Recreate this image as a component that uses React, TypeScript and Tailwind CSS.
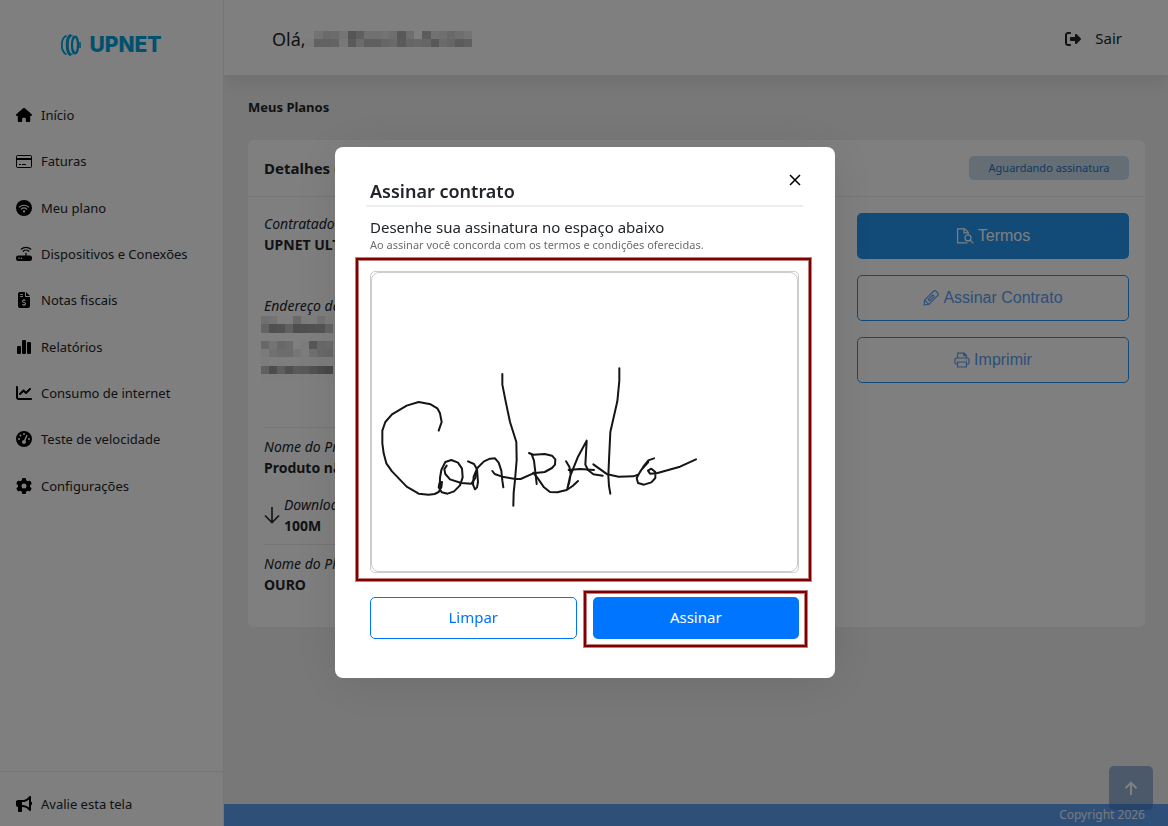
import type { ReactNode } from "react";
import {
 FaBullhorn,
 FaChartLine,
 FaFileInvoiceDollar,
 FaGaugeHigh,
 FaGear,
 FaHouse,
 FaRightFromBracket,
} from "react-icons/fa6";

function CardIcon() {
 return (
  <svg viewBox="0 0 16 16" className="size-4" aria-hidden="true">
   <rect x="0.5" y="2.5" width="15" height="12" rx="1" fill="none" stroke="currentColor" />
   <path d="M1 5h14v2H1z" fill="currentColor" />
   <path d="M3 11.500h2M6 11.500h4" stroke="currentColor" />
  </svg>
 );
}

function WifiCircleIcon() {
 return (
  <svg viewBox="0 0 16 16" className="size-4" aria-hidden="true">
   <circle cx="8" cy="8" r="8" fill="currentColor" />
   <g fill="none" stroke="#fff" strokeWidth="1.2" strokeLinecap="round">
    <path d="M3.4 7.1a6.6 6.6 0 0 1 9.2 0" />
    <path d="M5.3 9.2a3.9 3.9 0 0 1 5.4 0" />
   </g>
   <circle cx="8" cy="11.4" r="1.1" fill="#fff" />
  </svg>
 );
}

function RouterIcon() {
 return (
  <svg viewBox="0 0 16 16" className="size-4" aria-hidden="true">
   <g fill="none" stroke="currentColor" strokeWidth="1.2" strokeLinecap="round">
    <path d="M5.200 3.200a7 7 0 0 1 9.600 0" />
    <path d="M7.200 5.300a4 4 0 0 1 5.600 0" />
    <path d="M10 7v3" />
   </g>
   <rect x="0" y="9.500" width="16" height="5.500" rx="2.200" fill="currentColor" />
   <circle cx="3" cy="12.300" r="0.800" fill="#fff" />
   <circle cx="5.600" cy="12.300" r="0.800" fill="#fff" />
  </svg>
 );
}

function BarsIcon() {
 return (
  <svg viewBox="0 0 16 16" className="size-4" fill="currentColor" aria-hidden="true">
   <rect x="1" y="7" width="4" height="8" rx="1.2" />
   <rect x="6" y="1" width="4" height="14" rx="1.2" />
   <rect x="11" y="3" width="4" height="12" rx="1.2" />
  </svg>
 );
}

function FileSearchIcon() {
 return (
  <svg viewBox="0 0 18 18" className="size-[18px]" fill="none" stroke="currentColor" strokeWidth="1.2" aria-hidden="true">
   <path d="M11.5 15.9H1.6V1.9h7.2l3.4 3.4v1.5" />
   <path d="M8 1.9v4h4.2" />
   <circle cx="12" cy="10.9" r="3" />
   <path d="m14.2 13.1 3.2 3.2" />
  </svg>
 );
}

function PencilIcon() {
 return (
  <svg viewBox="0 0 16 16" className="size-4" fill="none" stroke="currentColor" strokeWidth="1.2" strokeLinejoin="round" aria-hidden="true">
   <path d="M1 15 1.6 10.2 10.4 1.4a2 2 0 0 1 2.8 0l1.4 1.4a2 2 0 0 1 0 2.8L5.8 14.4Z" />
   <path d="m1.6 10.2 4.2 4.2M5.2 9.5l4.6-4.6 1.4 1.4-4.6 4.6Z" />
  </svg>
 );
}

function PrinterIcon() {
 return (
  <svg viewBox="0 0 16 16" className="size-4" fill="none" stroke="currentColor" strokeWidth="1.2" strokeLinejoin="round" aria-hidden="true">
   <path d="M3.6 6V1.2h6.6l2.2 2.2V6M9.8 1.2v2.4h2.6" />
   <path d="M3.6 12H2.2A1.2 1.2 0 0 1 1 10.8V7.6A1.6 1.6 0 0 1 2.6 6h10.8A1.6 1.6 0 0 1 15 7.6v3.200a1.200 1.200 0 0 1-1.200 1.200h-1.400" />
   <path d="M3.600 10h8.800v5H3.600ZM12.200 8h1" />
  </svg>
 );
}

const menu = [
 { label: "Início", icon: <FaHouse size={16} /> },
 { label: "Faturas", icon: <CardIcon /> },
 { label: "Meu plano", icon: <WifiCircleIcon /> },
 { label: "Dispositivos e Conexões", icon: <RouterIcon /> },
 { label: "Notas fiscais", icon: <FaFileInvoiceDollar size={16} /> },
 { label: "Relatórios", icon: <BarsIcon /> },
 { label: "Consumo de internet", icon: <FaChartLine size={16} /> },
 { label: "Teste de velocidade", icon: <FaGaugeHigh size={16} /> },
 { label: "Configurações", icon: <FaGear size={16} /> },
];

// grey level of every block, 0 to 255
const nameBlocks = [
 [255, 230, 212, 216, 234, 170, 190, 224, 224, 230, 220, 178, 220, 255, 184, 228, 222, 210, 220, 232],
 [248, 196, 196, 200, 240, 180, 214, 190, 190, 204, 212, 180, 204, 208, 204, 176, 214, 204, 182, 192],
];
const addressBlocks = [
 [224, 232, 252, 252, 210, 248, 252, 232, 250],
 [200, 160, 164, 192, 156, 160, 166, 168, 200],
 [255, 255, 255, 255, 255, 255, 255, 255, 255],
 [208, 232, 208, 216, 252, 248, 176, 212, 216],
 [244, 224, 216, 216, 236, 250, 224, 212, 208],
 [248, 252, 252, 252, 252, 250, 250, 250, 252],
 [192, 152, 188, 160, 180, 176, 164, 152, 144],
 [252, 252, 252, 252, 252, 252, 252, 252, 252],
];

function Mosaic({ blocks, className }: { blocks: number[][]; className: string }) {
 return (
  <svg
   viewBox={`0 0 ${blocks[0].length} ${blocks.length}`}
   preserveAspectRatio="none"
   shapeRendering="crispEdges"
   className={className}
   aria-hidden="true"
  >
   {blocks.map((row, y) =>
    row.map((v, x) => <rect key={`${x}-${y}`} x={x} y={y} width="1" height="1" fill={`rgb(${v},${v},${v})`} />)
   )}
  </svg>
 );
}

function Logo() {
 return (
  <div className="flex items-center justify-center gap-2 text-[#00a0dc]">
   <svg viewBox="0 0 20 22" className="h-[22px] w-5" fill="none" stroke="currentColor" aria-hidden="true">
    <path d="M5.500 1.500C-.8 5-.8 17 5.500 20.500" strokeWidth="1.800" />
    <path d="M10 1.200C5 3 5 19 10 20.800" strokeWidth="3" />
    <ellipse cx="14" cy="11" rx="3" ry="8.500" strokeWidth="2.200" />
    <path d="M10 1.200c2 .3 3 2 3.500 4M10 20.800c2-.3 3-2 3.500-4" strokeWidth="1" />
    <path d="M19 8v6" strokeWidth="1.600" />
   </svg>
   <span className="font-[Inter] text-[21px] leading-6 font-extrabold">UPNET</span>
  </div>
 );
}

function MenuLink({ icon, label }: { icon: ReactNode; label: string }) {
 return (
  <a href="#" className="flex flex-1 items-center gap-[9px] px-4 text-[13px] leading-5 text-[#212529]">
   <span className="flex w-4 justify-center text-black">{icon}</span>
   {label}
  </a>
 );
}

function Field({ label, value }: { label: string; value?: string }) {
 return (
  <div className="text-sm leading-[21px]">
   <p className="italic">{label}</p>
   {value && <p className="font-bold">{value}</p>}
  </div>
 );
}

function Sidebar() {
 return (
  <aside className="z-10 flex w-56 shrink-0 flex-col border-r border-[#ececec] bg-white">
   <div className="flex h-[92px] items-center justify-center pb-0.5">
    <Logo />
   </div>
   <nav className="flex h-[417px] flex-col">
    {menu.map((item) => (
     <MenuLink key={item.label} icon={item.icon} label={item.label} />
    ))}
   </nav>
   <div className="mt-auto flex h-[55px] border-t border-[#ececec] pt-2.5">
    <MenuLink icon={<FaBullhorn size={16} />} label="Avalie esta tela" />
   </div>
  </aside>
 );
}

function PlanCard() {
 return (
  <section className="mt-[22px] rounded-md bg-white">
   <div className="flex h-[57px] items-center justify-between border-b border-[#ececec] px-4">
    <h2 className="text-[15px] leading-6 font-bold">Detalhes do plano</h2>
    <span className="w-40 rounded-[5px] bg-[#cbdceb] text-center text-[11px] leading-6 text-[#2474c4]">Aguardando assinatura</span>
   </div>
   <div className="flex justify-between px-4 pt-4 pb-8">
    <div className="w-[560px]">
     <div className="h-[214px]">
      <Field label="Contratado por" value="UPNET ULTRA" />
      <div className="mt-10">
       <Field label="Endereço de instalação" />
       <Mosaic blocks={addressBlocks} className="-ml-[3px] h-[66px] w-[72px]" />
      </div>
     </div>
     <div className="border-t border-[#ececec] pt-2">
      <Field label="Nome do Produto" value="Produto não informado" />
     </div>
     <div className="mt-4 flex items-center gap-1 pb-2">
      <svg viewBox="0 0 16 18" className="h-[18px] w-4" fill="none" stroke="currentColor" strokeWidth="1.600" aria-hidden="true">
       <path d="M8 1v15M1 9.500l7 7 7-7" />
      </svg>
      <Field label="Download" value="100M" />
     </div>
     <div className="border-t border-[#ececec] pt-2">
      <Field label="Nome do Plano" value="OURO" />
     </div>
    </div>
    <div className="flex w-[272px] flex-col gap-4 font-['Liberation_Sans'] text-base text-[#5c9ef0]">
     <button className="flex h-[46px] items-center justify-center gap-1 rounded-[5px] bg-[#2494f0] text-white">
      <FileSearchIcon />
      Termos
     </button>
     <button className="flex h-[46px] items-center justify-center gap-1 rounded-[5px] border border-[#2494f0]">
      <PencilIcon />
      Assinar Contrato
     </button>
     <button className="flex h-[46px] items-center justify-center gap-1 rounded-[5px] border border-[#2494f0]">
      <PrinterIcon />
      Imprimir
     </button>
    </div>
   </div>
  </section>
 );
}

function Marker({ className }: { className: string }) {
 return (
  <div
   className={`pointer-events-none absolute border-2 border-[#800000] shadow-[0_0_0_1px_rgba(128,0,0,0.5),inset_0_0_0_1px_rgba(128,0,0,0.5)] ${className}`}
  />
 );
}

function Signature() {
 return (
  <svg
   viewBox="66 -231 1275 894"
   className="block w-full"
   fill="none"
   stroke="#151515"
   strokeWidth="6"
   strokeLinecap="round"
   strokeLinejoin="round"
   role="img"
   aria-label="Assinatura"
  >
   <path d="M266 242 275 216 270 190 262 175 242 163 206 156 170 167 126 193 106 216 97 242 97 280 101 310 109 340 126 364 170 410 206 431 236 434 254 432 266 426 274 412 276 396 268 400 266 412 275 427 293 431 312 424 330 406 338 382 336 356 324 338 304 330 286 336 274 360 270 384 269 420" />
   <path d="M290 347 283 358 286 372 300 388 334 399 364 401 376 384 381 358 372 342 354 334" />
   <path d="M381 358 384 396 381 412 375 418 369 404 371 380 382 354 402 334 420 326 435 325 446 338 454 362 457 392 460 412" />
   <path d="M427 363 434 372 456 380 496 387 512 387 550 370 584 366 606 354 615 344 616 328 606 317 584 312 550 314 537 309 545 313 552 332 556 366 560 402" />
   <path d="M457 72 457 104 467 154 480 216 499 276 500 330 495 390 491 428 490 467" />
   <path d="M550 368 564 386 582 412 600 426 622 427 650 420 668 408 684 393" />
   <path d="M648 334 658 350 662 372 658 396 652 416 660 380 684 320 710 272 708 310 706 344 714 360 730 373 758 377" />
   <path d="M656 360 690 357 732 360M730 343 772 373 806 380 850 379 866 373 880 350 895 331 912 325M895 336 872 362 860 384 864 399 882 404 904 397 916 384 916 366 904 356 894 362 900 371 920 370 990 350 1038 328" />
   <path d="M808 55 808 92 802 154 781 246 777 330 775 376 777 408 781 431" />
  </svg>
 );
}

function SignModal() {
 return (
  <div className="fixed inset-0 z-20 flex items-center justify-center bg-black/50 pb-0.5 pl-0.5">
   <div
    role="dialog"
    aria-label="Assinar contrato"
    className="relative w-[500px] rounded-lg bg-white pt-[30px] pr-9 pb-[39px] pl-[35px] shadow-[0_4px_50px_rgba(0,0,0,0.1)]"
   >
    <button aria-label="Fechar" className="absolute top-6 right-[31px] flex size-[18px] items-center justify-center text-black">
     <svg viewBox="0 0 12 12" className="size-3" stroke="currentColor" strokeWidth="1.500" aria-hidden="true">
      <path d="m1 1 10 10M11 1 1 11" />
     </svg>
    </button>
    <h1 className="-mx-1 border-b-2 border-[#eeeeee] px-1 text-lg leading-7 font-semibold">Assinar contrato</h1>
    <p className="mt-2 text-[15px] leading-6">Desenhe sua assinatura no espaço abaixo</p>
    <p className="text-[11px] leading-3 text-[#6c6c6c]">Ao assinar você concorda com os termos e condições oferecidas.</p>
    <div className="relative mt-5 rounded-[5px] border border-[#cccccc]">
     <div className="rounded-lg border border-[#cccccc]">
      <Signature />
     </div>
     <Marker className="-top-[14px] -right-[13px] -bottom-[9px] -left-[15px]" />
    </div>
    <div className="mt-6 grid grid-cols-2 gap-4 text-[15px]">
     <button className="h-[42px] rounded-[5px] border border-[#0075ff] text-[#0075ff]">Limpar</button>
     <div className="relative">
      <button className="h-[42px] w-full rounded-[5px] bg-[#0075ff] text-white">Assinar</button>
      <Marker className="-top-[6px] -right-2 -bottom-[8px] -left-[9px]" />
     </div>
    </div>
   </div>
  </div>
 );
}

export default function App() {
 return (
  <div className="flex min-h-screen bg-[#f0f0f0] font-['Noto_Sans',sans-serif] text-[#212529]">
   <Sidebar />
   <div className="relative flex min-w-0 flex-1 flex-col">
    <header className="flex h-[75px] items-center justify-between bg-white pt-0.5 pr-[46px] pl-12 shadow-[0_8px_16px_rgba(0,0,0,0.07)]">
     <div className="flex items-center text-lg">
      Olá,
      <Mosaic blocks={nameBlocks} className="h-4 w-[166px]" />
     </div>
     <a href="#" className="flex items-center gap-[14px] text-[15px]">
      <FaRightFromBracket size={16} />
      Sair
     </a>
    </header>
    <main className="flex-1 px-6 pt-[22px] pr-[23px]">
     <h1 className="text-[13px] leading-[21px] font-bold">Meus Planos</h1>
     <PlanCard />
    </main>
    <footer className="h-[22px] bg-[#5c9ef0] pr-[23px] text-right text-xs leading-[22px] text-white/90">Copyright 2026</footer>
    <button
     aria-label="Voltar ao topo"
     className="absolute right-[15px] bottom-4 flex size-11 items-center justify-center rounded-[5px] bg-[#3b73be]/50 text-white"
    >
     <svg viewBox="0 0 14 14" className="size-[14px]" fill="none" stroke="currentColor" strokeWidth="2" aria-hidden="true">
      <path d="M7 14V2M1.500 7.200 7 1.700l5.500 5.500" />
     </svg>
    </button>
   </div>
   <SignModal />
  </div>
 );
}
